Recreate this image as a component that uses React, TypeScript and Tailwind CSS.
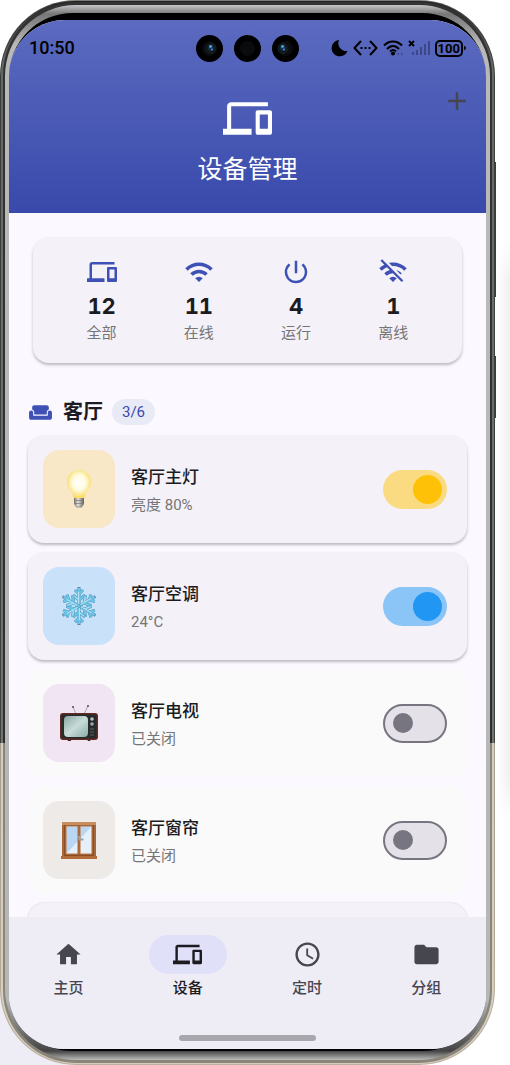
import { useState, type ReactNode } from "react";
import {
  MdAccessTime,
  MdAdd,
  MdDevices,
  MdFolder,
  MdHome,
  MdPowerSettingsNew,
  MdWeekend,
  MdWifi,
  MdWifiOff,
} from "react-icons/md";

interface Device {
  id: string;
  name: string;
  status: string;
  isOn: boolean;
  icon: ReactNode;
  tile: string;
  track: string;
  thumb: string;
}

const stats = [
  { label: "全部", value: 12, Icon: MdDevices },
  { label: "在线", value: 11, Icon: MdWifi },
  { label: "运行", value: 4, Icon: MdPowerSettingsNew },
  { label: "离线", value: 1, Icon: MdWifiOff },
];

const tabs = [
  { label: "主页", Icon: MdHome },
  { label: "设备", Icon: MdDevices },
  { label: "定时", Icon: MdAccessTime },
  { label: "分组", Icon: MdFolder },
];

function BulbIcon() {
  return (
    <svg width="40" height="40" viewBox="0 0 40 40">
      <defs>
        <radialGradient id="bulb" cx="50%" cy="45%" r="55%">
          <stop offset="0" stopColor="#ffffff" />
          <stop offset="0.5" stopColor="#fffbe0" />
          <stop offset="1" stopColor="#f9d95c" />
        </radialGradient>
        <linearGradient id="cap">
          <stop offset="0" stopColor="#6f6f6f" />
          <stop offset="0.4" stopColor="#e8e4da" />
          <stop offset="1" stopColor="#5c5c5c" />
        </linearGradient>
      </defs>
      <path d="M20 1C13 1 8 6 8 13c0 5 3 8 5 11 1 2 1 3 2 5h10c1-2 1-3 2-5 2-3 5-6 5-11C32 6 27 1 20 1z" fill="url(#bulb)" />
      <path d="M15 29h10v6l-2 3h-6l-2-3z" fill="url(#cap)" />
      <path d="M15 31.500h10M15 34.500h10M17 38h6" stroke="#777" strokeWidth="0.700" />
    </svg>
  );
}

function SnowflakeIcon() {
  return (
    <svg width="40" height="40" viewBox="0 0 40 40" fill="none">
      {[0, 60, 120, 180, 240, 300].map((angle) => (
        <g key={angle} transform={`rotate(${angle} 20 20)`}>
          <path d="M20 20V1M20 8l-4-4M20 8l4-4M20 14l-6-5M20 14l6-5" stroke="#5588a5" strokeWidth="3" />
          <path d="M20 20V2M20 8l-4-4M20 8l4-4M20 14l-6-5M20 14l6-5" stroke="#6cc4e8" strokeWidth="2.400" />
          <path d="M19.500 18V6M19 13l-4-3" stroke="#c4ebf7" strokeWidth="0.800" />
        </g>
      ))}
    </svg>
  );
}

function TvIcon() {
  return (
    <svg width="40" height="40" viewBox="0 0 40 40">
      <defs>
        <linearGradient id="screen" x1="0" y1="0" x2="1" y2="1">
          <stop offset="0" stopColor="#8aa5a3" />
          <stop offset="0.500" stopColor="#c8dcd8" />
          <stop offset="1" stopColor="#8ba9a6" />
        </linearGradient>
      </defs>
      <path d="M17 11L14 4M25 11l4-8" stroke="#8c858b" strokeWidth="0.700" />
      <circle cx="14" cy="4" r="1" fill="#544c50" />
      <circle cx="29" cy="3" r="1" fill="#544c50" />
      <path d="M8 36h4v2H9zM28 36h4l-1 2h-2z" fill="#4a2017" />
      <rect x="1" y="10" width="38" height="27" rx="3" fill="#602a22" />
      <rect x="2.500" y="11.500" width="35" height="24" rx="2" fill="#262a2b" />
      <rect x="5" y="13" width="24" height="21" rx="4" fill="url(#screen)" />
      <circle cx="33" cy="16" r="1.800" fill="#b9c0c2" />
      <circle cx="33" cy="21" r="1.800" fill="#9ca5a8" />
      <path d="M31 26h4M31 29h4M31 32h4" stroke="#5a6062" />
    </svg>
  );
}

function WindowIcon() {
  return (
    <svg width="40" height="40" viewBox="0 0 40 40">
      <path d="M3 2h34v35H3z" fill="#a6673a" />
      <path d="M3 2h34v3H3z" fill="#c68d60" />
      <path d="M5 5h30v31H5z" fill="#8a4e27" />
      <path d="M7 6h12v28H7zM21 6h12v28H21z" fill="#e5f0fb" />
      <path d="M7 6h12v15L7 34zM21 6h12L21 19z" fill="#b9d7f5" />
      <path d="M7 6h12v28H7zM21 6h12v28H21z" fill="none" stroke="#c27c48" strokeWidth="1.200" />
      <path d="M18.500 17h2v2.500h4" fill="none" stroke="#9ba1a8" strokeWidth="1.800" />
      <path d="M2 36h36v3H2z" fill="#b26b3a" />
    </svg>
  );
}

const initialDevices: Device[] = [
  { id: "light", name: "客厅主灯", status: "亮度 80%", isOn: true, icon: <BulbIcon />, tile: "bg-[#f8e8c8]", track: "bg-[#fadb82]", thumb: "bg-[#ffc107]" },
  { id: "ac", name: "客厅空调", status: "24°C", isOn: true, icon: <SnowflakeIcon />, tile: "bg-[#cae1fa]", track: "bg-[#8bc5f8]", thumb: "bg-[#2196f3]" },
  { id: "tv", name: "客厅电视", status: "已关闭", isOn: false, icon: <TvIcon />, tile: "bg-[#f1e4f3]", track: "bg-[#e0b0ea]", thumb: "bg-[#9c27b0]" },
  { id: "curtain", name: "客厅窗帘", status: "已关闭", isOn: false, icon: <WindowIcon />, tile: "bg-[#eeeae8]", track: "bg-[#bcaaa4]", thumb: "bg-[#795548]" },
];

function Switch({ device, onToggle }: { device: Device; onToggle: () => void }) {
  return (
    <label
      className={`flex h-[39px] w-16 shrink-0 cursor-pointer items-center rounded-full ${
        device.isOn ? `justify-end pr-[5px] ${device.track}` : "justify-start border-2 border-[#777680] bg-[#e4e1e9] pl-2"
      }`}
    >
      <input type="checkbox" className="sr-only" checked={device.isOn} onChange={onToggle} aria-label={device.name} />
      <span className={`rounded-full ${device.isOn ? `size-[29px] ${device.thumb}` : "size-5 bg-[#777680]"}`} />
    </label>
  );
}

function Camera({ lens }: { lens: string }) {
  return (
    <span className="flex size-[27px] items-center justify-center rounded-full bg-black">
      <svg width="17" height="17" viewBox="0 0 17 17">
        <circle cx="8.500" cy="8.500" r="7.500" fill="#0a0b0d" />
        {lens !== "none" && (
          <g transform={lens === "right" ? "translate(1 0)" : "translate(-3 0)"}>
            <circle cx="9" cy="8.500" r="5" fill="#10161e" stroke="#1c242d" strokeWidth="0.800" />
            <circle cx="9" cy="8" r="3" fill="#12304c" />
            <circle cx="8.500" cy="6.500" r="1.400" fill="#5ba3d4" />
            <circle cx="10" cy="9.500" r="1.100" fill="#4b86b5" />
          </g>
        )}
      </svg>
    </span>
  );
}

function StatusBar() {
  return (
    <div className="grid grid-cols-[1fr_auto_1fr] items-center pr-5 pl-5 text-black">
      <span className="text-lg leading-7 font-medium">10:50</span>
      <div className="flex gap-[11px]">
        <Camera lens="right" />
        <Camera lens="none" />
        <Camera lens="left" />
      </div>
      <div className="flex items-center justify-end gap-[5px]">
        <svg width="17" height="18" viewBox="0 0 17 18">
          <path d="M8 1A8.200 8.200 0 1 0 16.500 12A8 8 0 0 1 8 1z" fill="currentColor" />
        </svg>
        <svg width="25" height="16" viewBox="0 0 25 16" fill="none" stroke="currentColor" strokeWidth="2">
          <path d="M8 1L1.500 8L8 15M17 1l6.500 7L17 15" strokeLinejoin="round" />
          <path d="M7.500 8h2M11.500 8h2M15.500 8h2" />
        </svg>
        <svg width="20" height="16" viewBox="0 0 20 16" fill="none" stroke="currentColor" strokeWidth="2">
          <path d="M1 5.500C6 0 14 0 19 5.500M4 9c3.500-4 8.500-4 12 0M7 11.500c2-2 4-2 6 0" />
          <circle cx="10" cy="13.500" r="2" fill="currentColor" stroke="none" />
          <path d="M14 14l2-1.500v3zM20 14l-2-1.500v3z" fill="#3b4687" stroke="none" />
        </svg>
        <svg width="22" height="16" viewBox="0 0 22 16" fill="none">
          <path d="M1 1l5 5M6 1L1 6" stroke="currentColor" strokeWidth="1.800" />
          <path d="M5 12v3M9 10v5M13 7v8M17 4v11M21 1v14" stroke="#3d4787" strokeWidth="2" />
        </svg>
        <div className="flex items-center gap-px">
          <span className="rounded-[5px] border-2 border-black px-px text-[13px] leading-[13px] font-bold">100</span>
          <span className="h-1 w-0.5 rounded-r bg-black" />
        </div>
      </div>
    </div>
  );
}

function PhoneFrame({ children }: { children: ReactNode }) {
  return (
    <div className="min-w-0 flex-1 rounded-[76px] bg-[linear-gradient(#85887f_0,#4a4b49_3px,#3b3c3b_40px,#3f403f_743px,#a49c8e_743px,#b9b0a1_100%)] p-px">
      <div className="h-full rounded-[75px] bg-[linear-gradient(#222_0,#656765_60px,#727472_742px,#d5cdbe_742px,#d5cdbe_100%)] px-0.5 py-px">
        <div className="h-full rounded-[73px] bg-[linear-gradient(#333_0,#2d2e2e_741px,#8b8478_741px,#8b8478_100%)] px-0.5 py-[3px]">
          <div className="h-full rounded-[71px] bg-[linear-gradient(#c5c5c5_0,#777_9px,#b8b9b8_40px,#b5b7b7_calc(100%_-_60px),#444_calc(100%_-_9px),#bbb_100%)] px-1 pt-2 pb-[9px]">
            <div className="h-full rounded-[64px] bg-black pt-[7px] pb-0.5">
              <div className="flex h-full flex-col overflow-hidden rounded-[56px] bg-[#fbf8ff]">{children}</div>
            </div>
          </div>
        </div>
      </div>
    </div>
  );
}

export default function App() {
  const [devices, setDevices] = useState<Device[]>(initialDevices);
  const [activeTab, setActiveTab] = useState("设备");

  const toggleDevice = (id: string) => {
    setDevices((prev) => prev.map((d) => (d.id === id ? { ...d, isOn: !d.isOn } : d)));
  };

  return (
    <div className="flex h-screen bg-[linear-gradient(#fff_70%,transparent_70%),linear-gradient(90deg,#eeecf4_50%,#fff_50%)] font-[Roboto,'Noto_Sans_CJK_SC',sans-serif] text-[#1b1b21]">
      <PhoneFrame>
        {/* Header */}
        <header className="shrink-0 bg-linear-to-b from-[#5c6bc0] to-[#3949ab] pt-3.5 pb-[25px]">
          <StatusBar />
          <div className="grid grid-cols-[1fr_auto_1fr] pt-5 pr-3.5 pl-3.5">
            <span />
            <div className="flex flex-col items-center pt-3 text-white">
              <MdDevices size={49} />
              <h1 className="mt-[9px] text-[25px] leading-9">设备管理</h1>
            </div>
            <button type="button" aria-label="添加设备" className="mt-1 size-[30px] justify-self-end text-[#46464f]">
              <MdAdd size={30} />
            </button>
          </div>
        </header>

        <main className="min-h-0 flex-1 overflow-hidden">
          {/* Stats */}
          <section className="mx-6 mt-6 grid grid-cols-4 rounded-2xl bg-[#f4f1f9] px-5 py-5 shadow-[0_2px_3px_rgba(0,0,0,0.25)]">
            {stats.map(({ label, value, Icon }) => (
              <div key={label} className="flex flex-col items-center">
                <Icon size={30} className="text-[#3f51b5]" />
                <strong className="mt-[5px] font-[Inter,sans-serif] text-[22px] leading-7 font-bold tabular-nums">{value}</strong>
                <span className="mt-[3px] text-[15px] leading-5 text-[#757575]">{label}</span>
              </div>
            ))}
          </section>

          {/* Room */}
          <div className="mt-9 flex items-center pl-[19px]">
            <MdWeekend size={25} className="text-[#3f51b5]" />
            <h2 className="ml-2.5 text-xl leading-6 font-bold">客厅</h2>
            <span className="ml-[9px] rounded-full bg-[#e8eaf6] px-2.5 text-[15px] leading-[26px] text-[#3949ab]">3/6</span>
          </div>

          <ul className="mx-[19px] mt-2.5 flex flex-col gap-[9px]">
            {devices.map((device) => (
              <li
                key={device.id}
                className={`flex items-center rounded-2xl py-[15px] pr-5 pl-[15px] ${
                  device.isOn ? "bg-[#f4f1f9] shadow-[0_2px_3px_rgba(0,0,0,0.25)]" : "bg-[#fafafa]"
                }`}
              >
                <div className={`flex h-[78px] w-[72px] shrink-0 items-center justify-center rounded-2xl ${device.tile}`}>
                  {device.icon}
                </div>
                <div className="ml-4 flex-1 pt-1">
                  <h3 className="text-[17px] leading-6 font-medium">{device.name}</h3>
                  <p className="mt-1 text-[15px] leading-6 text-[#757575]">{device.status}</p>
                </div>
                <Switch device={device} onToggle={() => toggleDevice(device.id)} />
              </li>
            ))}
            <li className="h-[108px] rounded-2xl bg-[#f4f1f9] shadow-[0_0_2px_rgba(0,0,0,0.2)]" />
          </ul>
        </main>

        {/* Bottom navigation */}
        <nav className="shrink-0 bg-[#eeecf4] pt-[18px] pb-2">
          <div className="grid grid-cols-4">
            {tabs.map(({ label, Icon }) => {
              const isActive = activeTab === label;
              return (
                <button
                  key={label}
                  type="button"
                  onClick={() => setActiveTab(label)}
                  className={`flex flex-col items-center ${isActive ? "text-[#1b1b21]" : "text-[#46464f]"}`}
                >
                  <span className={`flex h-[39px] w-[78px] items-center justify-center rounded-full ${isActive ? "bg-[#e0e0f9]" : ""}`}>
                    <Icon size={29} />
                  </span>
                  <span className="mt-1 text-[15px] leading-5 font-medium">{label}</span>
                </button>
              );
            })}
          </div>
          <div className="mx-auto mt-[37px] h-1.5 w-[137px] rounded-full bg-[#a8a7ad]" />
        </nav>
      </PhoneFrame>

      {/* Side keys and the soft shadow beside the phone */}
      <div className="flex w-[15px] shrink-0 items-start">
        <div className="flex w-px flex-col gap-[59px] pt-[162px]">
          <span className="h-[135px] bg-[#3b3c3b]" />
          <span className="h-[62px] bg-[#3b3c3b]" />
        </div>
        <div className="mt-[240px] h-[580px] flex-1 bg-linear-to-r from-white to-[#f0f0f0] mask-[linear-gradient(transparent,black_40px,black_540px,transparent)]" />
      </div>
    </div>
  );
}
